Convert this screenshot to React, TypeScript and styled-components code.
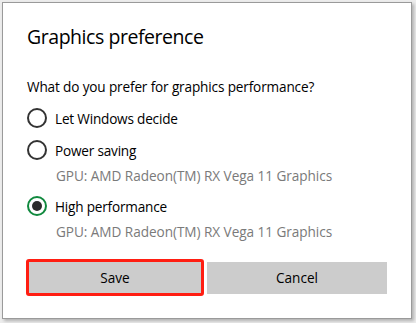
import React from "react"
import styled, { createGlobalStyle } from "styled-components"

const GlobalStyle = createGlobalStyle`
  html, body {
    margin: 0;
    padding: 0;
    background: #ececec;
  }
  body {
    font-family: "Open Sans", "Noto Sans", "Liberation Sans", sans-serif;
    color: #000;
  }
`

const Page = styled.div`
  width: 416px;
  height: 323px;
  padding: 2px 0 0 2px;
  box-sizing: border-box;
`

const Dialog = styled.div`
  width: 410px;
  height: 317px;
  box-sizing: border-box;
  background: #fff;
  border: 1px solid #9a9a9a;
  box-shadow: 2px 2px 3px rgba(0, 0, 0, 0.25);
  padding: 0 23px 0 24px;
  display: flex;
  flex-direction: column;
`

const Title = styled.h1`
  margin: 20px 0 0 0;
  font-size: 19.5px;
  line-height: 28px;
  font-weight: 400;
  letter-spacing: -0.45px;
  color: #000;
`

const Question = styled.p`
  margin: 26px 0 0 0;
  font-size: 13.6px;
  line-height: 20px;
  letter-spacing: -0.15px;
  color: #000;
`

const Options = styled.div`
  display: flex;
  flex-direction: column;
  margin-top: 5px;
`

const Option = styled.label`
  display: flex;
  align-items: center;
  gap: 8px;
  height: 32px;
  font-size: 13.6px;
  letter-spacing: -0.2px;
  color: #000;
`

const Radio = styled.span<{ $checked?: boolean }>`
  width: 20px;
  height: 20px;
  box-sizing: border-box;
  border-radius: 50%;
  border: 2px solid ${(p) => (p.$checked ? "#10893e" : "#333")};
  display: flex;
  align-items: center;
  justify-content: center;
  &::after {
    content: "";
    display: ${(p) => (p.$checked ? "block" : "none")};
    width: 10px;
    height: 10px;
    border-radius: 50%;
    background: #2b2b2b;
  }
`

const Detail = styled.div`
  padding-left: 29px;
  font-size: 13.6px;
  line-height: 20px;
  letter-spacing: -0.05px;
  color: #7a7a7a;
  margin: 0 0 4px 0;
`

const Actions = styled.div`
  display: flex;
  align-items: center;
  gap: 3px;
  margin-top: 13px;
  margin-left: -1px;
`

const Button = styled.button<{ $focused?: boolean }>`
  font-family: inherit;
  font-size: 13.6px;
  color: #000;
  background: #cccccc;
  box-sizing: border-box;
  width: ${(p) => (p.$focused ? "178px" : "180px")};
  height: ${(p) => (p.$focused ? "37px" : "32px")};
  border: ${(p) => (p.$focused ? "3px solid #ff1e12" : "none")};
  border-radius: ${(p) => (p.$focused ? "3px" : "0")};
  padding: 0;
`

const gpu = "GPU: AMD Radeon(TM) RX Vega 11 Graphics"

export default function App() {
  return (
    <Page>
      <GlobalStyle />
      <Dialog>
        <Title>Graphics preference</Title>
        <Question>What do you prefer for graphics performance?</Question>
        <Options>
          <Option>
            <Radio />
            Let Windows decide
          </Option>
          <Option>
            <Radio />
            Power saving
          </Option>
          <Detail>{gpu}</Detail>
          <Option>
            <Radio $checked />
            High performance
          </Option>
          <Detail>{gpu}</Detail>
        </Options>
        <Actions>
          <Button $focused>Save</Button>
          <Button>Cancel</Button>
        </Actions>
      </Dialog>
    </Page>
  )
}
